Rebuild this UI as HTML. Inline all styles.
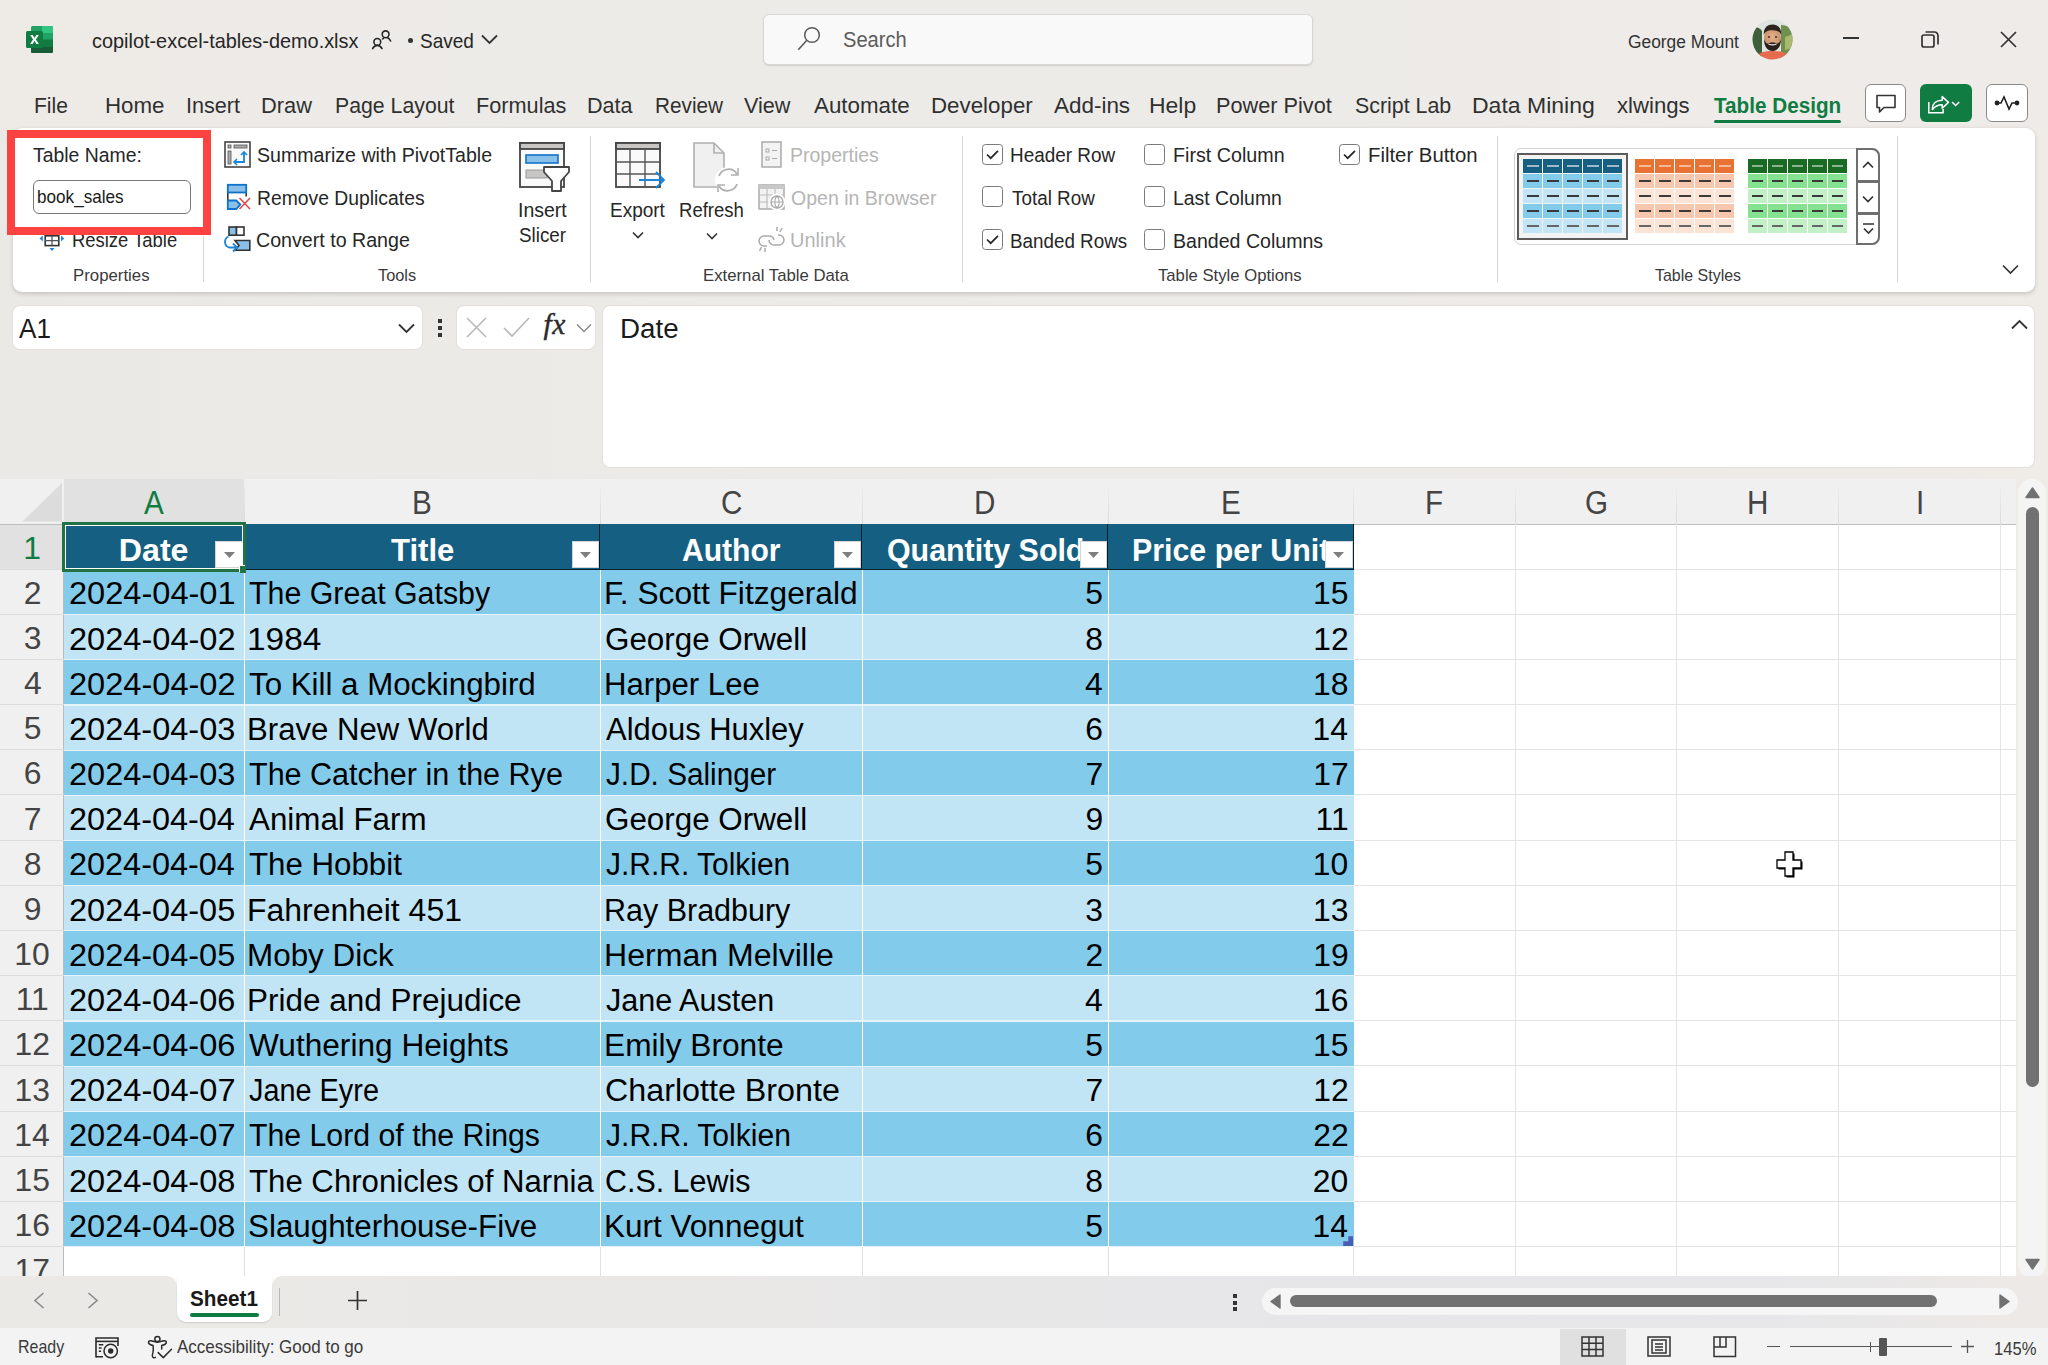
<!DOCTYPE html><html><head><meta charset='utf-8'><style>
*{box-sizing:border-box;margin:0;padding:0}
html,body{width:2048px;height:1365px;overflow:hidden}
body{position:relative;background:linear-gradient(90deg,#ebe9e6 0%,#ecebe8 50%,#efebe7 100%);font-family:"Liberation Sans",sans-serif;color:#262626}
.a{position:absolute}
.t{position:absolute;white-space:nowrap;line-height:1}
svg{position:absolute;overflow:visible}
</style></head><body><div class="a" style="left:0px;top:0px;width:2048px;height:128px;background:linear-gradient(90deg,#eeebe7 0%,#ecebe8 50%,#efebe8 100%)"></div>
<svg style="left:26px;top:26px" width="27" height="27" viewBox="0 0 27 27">
<rect x="5" y="0" width="22" height="27" rx="1.5" fill="#21a366"/>
<rect x="16" y="0" width="11" height="7" fill="#33c481"/>
<rect x="5" y="13.5" width="22" height="7" fill="#107c41"/>
<path d="M5 20.5h22v5a1.5 1.5 0 0 1-1.5 1.5h-19A1.5 1.5 0 0 1 5 25.5z" fill="#185c37"/>
<rect x="0" y="5" width="17" height="17" rx="1.5" fill="#107c41"/>
<path d="M4.2 9h2.6l1.7 3.1 1.8-3.1h2.5l-2.9 4.5 3 4.5h-2.6l-1.8-3.2-1.8 3.2H4.1l3-4.5z" fill="#fff"/>
</svg>
<div class="t" style="left:91.80px;top:31.45px;font-size:20.3px;color:#262626;font-weight:400;transform:scaleX(0.9808);transform-origin:0 0;">copilot-excel-tables-demo.xlsx</div>
<svg style="left:371px;top:29px" width="22" height="22" viewBox="0 0 22 22" fill="none" stroke="#262626" stroke-width="1.6" stroke-linecap="round">
<circle cx="6.3" cy="12.9" r="3.4"/><path d="M1.6 19.6C2.6 17.7 4.3 16.4 6.3 16.4S10 17.7 11 19.6"/>
<circle cx="14.6" cy="5.3" r="3.4"/><path d="M12.3 9.5l-0.8 .4M16.6 8.8C17.9 9.4 18.9 10.6 19.6 12"/></svg>
<div class="a" style="left:408px;top:38px;width:5px;height:5px;border-radius:50%;background:#333"></div>
<div class="t" style="left:420.15px;top:31.02px;font-size:20.8px;color:#262626;font-weight:400;transform:scaleX(0.9121);transform-origin:0 0;">Saved</div>
<svg style="left:481px;top:34px" width="17" height="11" viewBox="0 0 17 11"><path d="M1 1.5l7.5 7.5 7.5-7.5" fill="none" stroke="#333" stroke-width="1.8"/></svg>
<div class="a" style="left:762.5px;top:14px;width:550.0px;height:50.5px;background:#f9f9f9;border:1px solid #d9d6d3;border-radius:6px;box-shadow:0 1px 1.5px rgba(0,0,0,.12)"></div>
<svg style="left:797px;top:27px" width="24" height="24" viewBox="0 0 24 24"><circle cx="15" cy="8" r="7.3" fill="none" stroke="#5a5a5a" stroke-width="1.5"/><path d="M9.8 13.3L1.3 22.8" stroke="#5a5a5a" stroke-width="1.6"/></svg>
<div class="t" style="left:842.80px;top:29.19px;font-size:22.6px;color:#5c5c5c;font-weight:400;transform:scaleX(0.8893);transform-origin:0 0;">Search</div>
<div class="t" style="left:1627.53px;top:32.50px;font-size:18px;color:#333;font-weight:400;transform:scaleX(0.9638);transform-origin:0 0;">George Mount</div>
<svg style="left:1752px;top:19px" width="41" height="41" viewBox="0 0 41 41">
<defs><clipPath id="av"><circle cx="20.5" cy="20.5" r="20"/></clipPath><radialGradient id="fg" cx="0.5" cy="0.45" r="0.5"><stop offset="0" stop-color="#e3b08c"/><stop offset="1" stop-color="#c98f6a"/></radialGradient></defs>
<g clip-path="url(#av)">
<rect width="41" height="41" fill="#dfe3df"/>
<path d="M0 10q6-4 10 2v29H0z" fill="#3f5f3a"/>
<path d="M29 6q8 0 12 6v29H29z" fill="#6f8f4f"/>
<path d="M33 18l8-3v14l-8 2z" fill="#a9b86f"/>
<path d="M2 41c2-7 9-9 18.5-9S37 34 39 41z" fill="#e56a4e"/>
<ellipse cx="20.5" cy="19" rx="8.5" ry="10.5" fill="url(#fg)"/>
<path d="M11.8 16c-.5-7 3.5-10.5 8.7-10.5s9.2 3.5 8.7 10.5c-1-3-3-4.8-8.7-4.8s-7.7 1.8-8.7 4.8z" fill="#2e241f"/>
<path d="M12 20c0 8 3.8 12 8.5 12s8.5-4 8.5-12c-.8 2.5-2 4.3-3.8 4.8-1.5-.9-2.9-1.2-4.7-1.2s-3.2.3-4.7 1.2c-1.8-.5-3-2.3-3.8-4.8z" fill="#2a201b"/>
<path d="M16.5 25q4 1.8 8 0" stroke="#f4f4f4" stroke-width="1.1" fill="none"/>
<circle cx="17" cy="18" r=".9" fill="#2a201b"/><circle cx="24" cy="18" r=".9" fill="#2a201b"/>
</g></svg>
<div class="a" style="left:1843px;top:37px;width:16px;height:2px;background:#333"></div>
<svg style="left:1921px;top:31px" width="18" height="17" viewBox="0 0 18 17" fill="none" stroke="#333" stroke-width="1.7"><rect x="1" y="4" width="12" height="12" rx="2"/><path d="M4.5 1h9a3.5 3.5 0 0 1 3.5 3.5v9"/></svg>
<svg style="left:2000px;top:31px" width="17" height="17" viewBox="0 0 17 17"><path d="M1 1l15 15M16 1L1 16" stroke="#333" stroke-width="1.7"/></svg>
<div class="t" style="left:34.31px;top:93.80px;font-size:22.7px;color:#303030;font-weight:400;transform:scaleX(0.9285);transform-origin:0 0;">File</div>
<div class="t" style="left:104.81px;top:93.80px;font-size:22.7px;color:#303030;font-weight:400;transform:scaleX(0.9832);transform-origin:0 0;">Home</div>
<div class="t" style="left:186.05px;top:93.80px;font-size:22.7px;color:#303030;font-weight:400;transform:scaleX(0.9525);transform-origin:0 0;">Insert</div>
<div class="t" style="left:261.45px;top:93.80px;font-size:22.7px;color:#303030;font-weight:400;transform:scaleX(0.9631);transform-origin:0 0;">Draw</div>
<div class="t" style="left:334.70px;top:93.80px;font-size:22.7px;color:#303030;font-weight:400;transform:scaleX(0.9376);transform-origin:0 0;">Page Layout</div>
<div class="t" style="left:476.26px;top:93.80px;font-size:22.7px;color:#303030;font-weight:400;transform:scaleX(0.9561);transform-origin:0 0;">Formulas</div>
<div class="t" style="left:587.37px;top:93.80px;font-size:22.7px;color:#303030;font-weight:400;transform:scaleX(0.9503);transform-origin:0 0;">Data</div>
<div class="t" style="left:654.64px;top:93.80px;font-size:22.7px;color:#303030;font-weight:400;transform:scaleX(0.9141);transform-origin:0 0;">Review</div>
<div class="t" style="left:744.49px;top:93.80px;font-size:22.7px;color:#303030;font-weight:400;transform:scaleX(0.9529);transform-origin:0 0;">View</div>
<div class="t" style="left:813.59px;top:93.80px;font-size:22.7px;color:#303030;font-weight:400;transform:scaleX(0.9842);transform-origin:0 0;">Automate</div>
<div class="t" style="left:930.81px;top:93.80px;font-size:22.7px;color:#303030;font-weight:400;transform:scaleX(0.9838);transform-origin:0 0;">Developer</div>
<div class="t" style="left:1054.09px;top:93.80px;font-size:22.7px;color:#303030;font-weight:400;transform:scaleX(0.9889);transform-origin:0 0;">Add-ins</div>
<div class="t" style="left:1149.06px;top:93.80px;font-size:22.7px;color:#303030;font-weight:400;transform:scaleX(1.0108);transform-origin:0 0;">Help</div>
<div class="t" style="left:1216.26px;top:93.80px;font-size:22.7px;color:#303030;font-weight:400;transform:scaleX(0.9566);transform-origin:0 0;">Power Pivot</div>
<div class="t" style="left:1355.04px;top:93.80px;font-size:22.7px;color:#303030;font-weight:400;transform:scaleX(0.9419);transform-origin:0 0;">Script Lab</div>
<div class="t" style="left:1471.76px;top:93.80px;font-size:22.7px;color:#303030;font-weight:400;transform:scaleX(1.0143);transform-origin:0 0;">Data Mining</div>
<div class="t" style="left:1616.78px;top:93.80px;font-size:22.7px;color:#303030;font-weight:400;transform:scaleX(0.9764);transform-origin:0 0;">xlwings</div>
<div class="t" style="left:1713.79px;top:93.80px;font-size:22.7px;color:#107c41;font-weight:700;transform:scaleX(0.9115);transform-origin:0 0;">Table Design</div>
<div class="a" style="left:1714px;top:120px;width:127px;height:3px;background:#107c41;border-radius:2px"></div>
<div class="a" style="left:1865px;top:84px;width:41px;height:38px;background:#fff;border:1px solid #8a8a8a;border-radius:6px"></div>
<svg style="left:1875px;top:94px" width="22" height="20" viewBox="0 0 22 20"><path d="M2 1.5h18v12H9l-4.5 4.5v-4.5H2z" fill="none" stroke="#333" stroke-width="1.6" stroke-linejoin="round"/></svg>
<div class="a" style="left:1920px;top:84px;width:52px;height:38px;background:#107c41;border-radius:6px"></div>
<svg style="left:1927px;top:93px" width="34" height="21.5" viewBox="0 0 38 24" fill="none" stroke="#fff" stroke-width="1.7"><path d="M2 10v12h16v-4"/><path d="M6 18c0-6 4-10 11-10V4l7 6.5-7 6.5v-4c-5 0-8 1.5-11 5.5z" stroke-linejoin="round"/><path d="M28 10l4 4 4-4"/></svg>
<div class="a" style="left:1986px;top:84px;width:42px;height:38px;background:#fff;border:1px solid #8a8a8a;border-radius:6px"></div>
<svg style="left:1994px;top:94px" width="26" height="18" viewBox="0 0 26 18" fill="none" stroke="#222" stroke-width="1.6"><path d="M3 9h4l3-6 5 12 3-6h5"/><circle cx="3" cy="9" r="1.6" fill="#222"/><circle cx="23" cy="9" r="1.6" fill="#222"/></svg>
<div class="a" style="left:13px;top:128px;width:2022px;height:164px;background:#fff;border-radius:9px;box-shadow:0 1.5px 4px rgba(0,0,0,.16)"></div>
<div class="t" style="left:33.21px;top:146.29px;font-size:19.9px;color:#262626;font-weight:400;transform:scaleX(0.9749);transform-origin:0 0;">Table Name:</div>
<div class="a" style="left:33px;top:179.5px;width:158px;height:34.5px;border:1.3px solid #777;border-radius:6px;background:#fff"></div>
<div class="t" style="left:36.69px;top:187.93px;font-size:18.2px;color:#1a1a1a;font-weight:400;transform:scaleX(0.9416);transform-origin:0 0;">book_sales</div>
<svg style="left:39px;top:226px" width="26" height="28" viewBox="0 0 26 28"><rect x="6.2" y="9.8" width="13.6" height="9.8" fill="#fff" stroke="#333" stroke-width="1.6"/><path d="M6.2 14.7h13.6M13 9.8v9.8" stroke="#555" stroke-width="1.3"/><path d="M0.5 12.6l3.3-3v6z M25.3 12.6l-3.3-3v6z M13 25l-2.5-3h5z M13 0.5l-2.5 3h5z" fill="#1b86d9"/></svg>
<div class="t" style="left:71.82px;top:231.29px;font-size:19.9px;color:#262626;font-weight:400;transform:scaleX(0.9267);transform-origin:0 0;">Resize Table</div>
<div class="t" style="left:72.76px;top:268.09px;font-size:15.9px;color:#3a3a3a;font-weight:400;transform:scaleX(1.0567);transform-origin:0 0;">Properties</div>
<div class="a" style="left:7px;top:130px;width:204px;height:105px;border:8px solid #fd4242"></div>
<div class="a" style="left:203px;top:236px;width:1.3000000000000114px;height:46px;background:#d6d6d6"></div>
<svg style="left:224px;top:141px" width="27" height="27" viewBox="0 0 27 27"><rect x="1" y="1" width="25" height="25" fill="#fafafa" stroke="#444" stroke-width="1.6"/><rect x="4" y="4" width="3" height="3" fill="#aaa" stroke="#555" stroke-width=".8"/><rect x="10" y="4" width="13" height="3" fill="#aaa" stroke="#555" stroke-width=".8"/><rect x="4" y="10" width="3" height="13" fill="#aaa" stroke="#555" stroke-width=".8"/><path d="M11 21h9v-9" fill="none" stroke="#1b86d9" stroke-width="1.8"/><path d="M17 14l3-3 3 3M13 18l-3 3 3 3" fill="none" stroke="#1b86d9" stroke-width="1.6"/></svg>
<div class="t" style="left:256.52px;top:146.09px;font-size:19.9px;color:#262626;font-weight:400;transform:scaleX(0.9844);transform-origin:0 0;">Summarize with PivotTable</div>
<svg style="left:226px;top:183px" width="26" height="28" viewBox="0 0 26 28"><path d="M1.8 9.5v8M20.2 9.5v4" stroke="#333" stroke-width="1.6"/><rect x="1.8" y="1.8" width="18.4" height="7.7" fill="#89c0ea" stroke="#1172c9" stroke-width="1.8"/><path d="M1.8 17.5h8.5l4 4-4 4.5H1.8z" fill="#89c0ea" stroke="#1172c9" stroke-width="1.8" stroke-linejoin="miter"/><path d="M13.5 15l10.5 11M24 15L13.5 26" stroke="#e8413b" stroke-width="1.5"/></svg>
<div class="t" style="left:256.55px;top:188.69px;font-size:19.9px;color:#262626;font-weight:400;transform:scaleX(0.9715);transform-origin:0 0;">Remove Duplicates</div>
<svg style="left:223px;top:226px" width="28" height="28" viewBox="0 0 28 28"><rect x="6" y="1" width="7.5" height="8.2" fill="#89c0ea" stroke="#333" stroke-width="1.6"/><rect x="13.5" y="1" width="7.5" height="8.2" fill="#fafafa" stroke="#333" stroke-width="1.6"/><path d="M12 14.5h14.8v9.8H12l4-4.9z" fill="#89c0ea" stroke="#333" stroke-width="1.6" stroke-linejoin="miter"/><path d="M5.5 10.5C1 12.5 0.5 19.5 6 21.5h7.5M10 17.5l4 4-4 4" fill="none" stroke="#1b86d9" stroke-width="1.8"/></svg>
<div class="t" style="left:256.42px;top:231.09px;font-size:19.9px;color:#262626;font-weight:400;transform:scaleX(0.9869);transform-origin:0 0;">Convert to Range</div>
<div class="t" style="left:377.67px;top:268.19px;font-size:15.9px;color:#3a3a3a;font-weight:400;transform:scaleX(1.0289);transform-origin:0 0;">Tools</div>
<svg style="left:519px;top:142px" width="52" height="52" viewBox="0 0 52 52"><rect x="1" y="1" width="44" height="44" fill="#fafafa" stroke="#444" stroke-width="1.8"/><rect x="1" y="1" width="44" height="6" fill="#c8c6c4" stroke="#444" stroke-width="1.8"/><rect x="7" y="13" width="32" height="8" fill="#89c0ea" stroke="#1172c9" stroke-width="1.6"/><rect x="7" y="28" width="21" height="8" fill="#c8c6c4" stroke="#999" stroke-width="1"/><path d="M25 25h25v5l-8 9v10h-9V39l-8-9z" fill="#fff" stroke="#444" stroke-width="1.8" stroke-linejoin="round"/></svg>
<div class="t" style="left:517.94px;top:200.89px;font-size:19.9px;color:#262626;font-weight:400;transform:scaleX(0.9800);transform-origin:0 0;">Insert</div>
<div class="t" style="left:519.15px;top:226.29px;font-size:19.9px;color:#262626;font-weight:400;transform:scaleX(0.9474);transform-origin:0 0;">Slicer</div>
<div class="a" style="left:589.5px;top:136px;width:1.2999999999999545px;height:146px;background:#d6d6d6"></div>
<svg style="left:615px;top:142px" width="52" height="52" viewBox="0 0 52 52"><rect x="1" y="1" width="44" height="44" fill="#fafafa" stroke="#444" stroke-width="1.8"/><rect x="1" y="1" width="44" height="6" fill="#c8c6c4" stroke="#444" stroke-width="1.8"/><path d="M1 20h44M1 32h44M15 7v38M30 7v38" stroke="#555" stroke-width="1.4"/><path d="M24 38h25M41 30l8 8-8 8" fill="none" stroke="#1b86d9" stroke-width="1.8"/></svg>
<div class="t" style="left:610.18px;top:200.89px;font-size:19.9px;color:#262626;font-weight:400;transform:scaleX(0.9549);transform-origin:0 0;">Export</div>
<svg style="left:632px;top:231px" width="12" height="8" viewBox="0 0 12 8"><path d="M1 1.5l5 5 5-5" fill="none" stroke="#333" stroke-width="1.6"/></svg>
<svg style="left:693px;top:142px" width="48" height="52" viewBox="0 0 48 52"><path d="M1 1h20l10 10v34H1z" fill="#f0f0f0" stroke="#b0b0b0" stroke-width="1.6"/><path d="M21 1v10h10" fill="none" stroke="#b0b0b0" stroke-width="1.6"/><circle cx="35" cy="38" r="13" fill="#fff"/><path d="M26 34a10 10 0 0 1 18-2M44 42a10 10 0 0 1-18 2" fill="none" stroke="#b0b0b0" stroke-width="1.8"/><path d="M45 26v7h-7M25 50v-7h7" fill="none" stroke="#b0b0b0" stroke-width="1.6"/></svg>
<div class="t" style="left:679.02px;top:201.49px;font-size:19.9px;color:#262626;font-weight:400;transform:scaleX(0.9316);transform-origin:0 0;">Refresh</div>
<svg style="left:706px;top:232px" width="12" height="8" viewBox="0 0 12 8"><path d="M1 1.5l5 5 5-5" fill="none" stroke="#333" stroke-width="1.6"/></svg>
<svg style="left:761px;top:141px" width="21" height="27" viewBox="0 0 21 27"><rect x="1" y="1" width="19" height="25" fill="#f3f3f3" stroke="#aaa" stroke-width="1.5"/><rect x="5" y="8" width="3" height="3" fill="none" stroke="#aaa"/><rect x="5" y="16" width="3" height="3" fill="none" stroke="#aaa"/><path d="M11 9.5h5M11 17.5h5" stroke="#aaa" stroke-width="1.2"/></svg>
<div class="t" style="left:790.24px;top:145.89px;font-size:19.9px;color:#b5b5b5;font-weight:400;transform:scaleX(0.9801);transform-origin:0 0;">Properties</div>
<svg style="left:758px;top:184px" width="28" height="27" viewBox="0 0 28 27"><rect x="1" y="1" width="25" height="24" fill="#f3f3f3" stroke="#aaa" stroke-width="1.5"/><rect x="1" y="1" width="25" height="4" fill="#c8c8c8"/><path d="M1 11h25M1 18h10M9 5v20M17 5v8" stroke="#bbb" stroke-width="1.1"/><circle cx="19" cy="18" r="8.5" fill="#fff"/><circle cx="19" cy="18" r="6" fill="none" stroke="#aaa" stroke-width="1.4"/><path d="M13 18h12M19 12c-3 3-3 9 0 12M19 12c3 3 3 9 0 12" fill="none" stroke="#aaa" stroke-width="1.1"/></svg>
<div class="t" style="left:790.92px;top:188.79px;font-size:19.9px;color:#b5b5b5;font-weight:400;transform:scaleX(0.9819);transform-origin:0 0;">Open in Browser</div>
<svg style="left:758px;top:226px" width="27" height="27" viewBox="0 0 27 27" fill="none" stroke="#aaa" stroke-width="1.5"><path d="M9 20H6a5 5 0 0 1 0-10h5a5 5 0 0 1 5 4"/><path d="M11 14a5 5 0 0 0 5 5h5a5 5 0 0 0 0-10h-1"/><path d="M19 1v4M24 2l-2 4M1.5 25l2-4M7 26v-4"/></svg>
<div class="t" style="left:790.30px;top:231.29px;font-size:19.9px;color:#b5b5b5;font-weight:400;transform:scaleX(1.0069);transform-origin:0 0;">Unlink</div>
<div class="t" style="left:702.66px;top:268.39px;font-size:15.9px;color:#3a3a3a;font-weight:400;transform:scaleX(1.0538);transform-origin:0 0;">External Table Data</div>
<div class="a" style="left:962px;top:136px;width:1.2999999999999545px;height:146px;background:#d6d6d6"></div>
<div class="a" style="left:981.5px;top:143.8px;width:21px;height:21px;border:1.6px solid #7a7a7a;border-radius:3.5px;background:#fff"></div>
<svg style="left:981.5px;top:143.8px" width="21" height="21" viewBox="0 0 21 21"><path d="M5 10.5l3.7 3.7 7.3-7.3" fill="none" stroke="#262626" stroke-width="1.7"/></svg>
<div class="t" style="left:1010.49px;top:146.19px;font-size:19.9px;color:#262626;font-weight:400;transform:scaleX(0.9509);transform-origin:0 0;">Header Row</div>
<div class="a" style="left:981.5px;top:186.3px;width:21px;height:21px;border:1.6px solid #7a7a7a;border-radius:3.5px;background:#fff"></div>
<div class="t" style="left:1011.62px;top:188.69px;font-size:19.9px;color:#262626;font-weight:400;transform:scaleX(0.9476);transform-origin:0 0;">Total Row</div>
<div class="a" style="left:981.5px;top:229.2px;width:21px;height:21px;border:1.6px solid #7a7a7a;border-radius:3.5px;background:#fff"></div>
<svg style="left:981.5px;top:229.2px" width="21" height="21" viewBox="0 0 21 21"><path d="M5 10.5l3.7 3.7 7.3-7.3" fill="none" stroke="#262626" stroke-width="1.7"/></svg>
<div class="t" style="left:1010.49px;top:231.69px;font-size:19.9px;color:#262626;font-weight:400;transform:scaleX(0.9458);transform-origin:0 0;">Banded Rows</div>
<div class="a" style="left:1144px;top:143.8px;width:21px;height:21px;border:1.6px solid #7a7a7a;border-radius:3.5px;background:#fff"></div>
<div class="t" style="left:1172.62px;top:146.19px;font-size:19.9px;color:#262626;font-weight:400;transform:scaleX(0.9905);transform-origin:0 0;">First Column</div>
<div class="a" style="left:1144px;top:186.3px;width:21px;height:21px;border:1.6px solid #7a7a7a;border-radius:3.5px;background:#fff"></div>
<div class="t" style="left:1172.65px;top:188.69px;font-size:19.9px;color:#262626;font-weight:400;transform:scaleX(0.9747);transform-origin:0 0;">Last Column</div>
<div class="a" style="left:1144px;top:229.2px;width:21px;height:21px;border:1.6px solid #7a7a7a;border-radius:3.5px;background:#fff"></div>
<div class="t" style="left:1172.63px;top:231.69px;font-size:19.9px;color:#262626;font-weight:400;transform:scaleX(0.9837);transform-origin:0 0;">Banded Columns</div>
<div class="a" style="left:1339.3px;top:143.8px;width:21px;height:21px;border:1.6px solid #7a7a7a;border-radius:3.5px;background:#fff"></div>
<svg style="left:1339.3px;top:143.8px" width="21" height="21" viewBox="0 0 21 21"><path d="M5 10.5l3.7 3.7 7.3-7.3" fill="none" stroke="#262626" stroke-width="1.7"/></svg>
<div class="t" style="left:1367.77px;top:146.19px;font-size:19.9px;color:#262626;font-weight:400;transform:scaleX(1.0223);transform-origin:0 0;">Filter Button</div>
<div class="t" style="left:1158.47px;top:267.99px;font-size:15.9px;color:#3a3a3a;font-weight:400;transform:scaleX(1.0492);transform-origin:0 0;">Table Style Options</div>
<div class="a" style="left:1497px;top:136px;width:1.2999999999999545px;height:146px;background:#d6d6d6"></div>
<div class="a" style="left:1513.7px;top:148.3px;width:366.29999999999995px;height:97.19999999999999px;border:1.5px solid #d2d2d2;border-radius:7px;background:#fff"></div>
<div class="a" style="left:1516.6px;top:152.7px;width:111.80000000000018px;height:87.10000000000002px;border:2.2px solid #5c5c5c;background:#f3f3f3"></div>
<div class="a" style="left:1523.00px;top:159.00px;width:19.00px;height:14.10px;background:#156082"></div><div class="a" style="left:1527.00px;top:165.05px;width:11.5px;height:2px;background:#9fb9c8"></div><div class="a" style="left:1543.00px;top:159.00px;width:19.00px;height:14.10px;background:#156082"></div><div class="a" style="left:1547.00px;top:165.05px;width:11.5px;height:2px;background:#9fb9c8"></div><div class="a" style="left:1563.00px;top:159.00px;width:19.00px;height:14.10px;background:#156082"></div><div class="a" style="left:1567.00px;top:165.05px;width:11.5px;height:2px;background:#9fb9c8"></div><div class="a" style="left:1583.00px;top:159.00px;width:19.00px;height:14.10px;background:#156082"></div><div class="a" style="left:1587.00px;top:165.05px;width:11.5px;height:2px;background:#9fb9c8"></div><div class="a" style="left:1603.00px;top:159.00px;width:19.00px;height:14.10px;background:#156082"></div><div class="a" style="left:1607.00px;top:165.05px;width:11.5px;height:2px;background:#9fb9c8"></div><div class="a" style="left:1523.00px;top:174.10px;width:19.00px;height:14.10px;background:#83cbeb"></div><div class="a" style="left:1527.00px;top:180.15px;width:11.5px;height:2px;background:#3a3a3a"></div><div class="a" style="left:1543.00px;top:174.10px;width:19.00px;height:14.10px;background:#83cbeb"></div><div class="a" style="left:1547.00px;top:180.15px;width:11.5px;height:2px;background:#3a3a3a"></div><div class="a" style="left:1563.00px;top:174.10px;width:19.00px;height:14.10px;background:#83cbeb"></div><div class="a" style="left:1567.00px;top:180.15px;width:11.5px;height:2px;background:#3a3a3a"></div><div class="a" style="left:1583.00px;top:174.10px;width:19.00px;height:14.10px;background:#83cbeb"></div><div class="a" style="left:1587.00px;top:180.15px;width:11.5px;height:2px;background:#3a3a3a"></div><div class="a" style="left:1603.00px;top:174.10px;width:19.00px;height:14.10px;background:#83cbeb"></div><div class="a" style="left:1607.00px;top:180.15px;width:11.5px;height:2px;background:#3a3a3a"></div><div class="a" style="left:1523.00px;top:189.20px;width:19.00px;height:14.10px;background:#c1e5f5"></div><div class="a" style="left:1527.00px;top:195.25px;width:11.5px;height:2px;background:#3a3a3a"></div><div class="a" style="left:1543.00px;top:189.20px;width:19.00px;height:14.10px;background:#c1e5f5"></div><div class="a" style="left:1547.00px;top:195.25px;width:11.5px;height:2px;background:#3a3a3a"></div><div class="a" style="left:1563.00px;top:189.20px;width:19.00px;height:14.10px;background:#c1e5f5"></div><div class="a" style="left:1567.00px;top:195.25px;width:11.5px;height:2px;background:#3a3a3a"></div><div class="a" style="left:1583.00px;top:189.20px;width:19.00px;height:14.10px;background:#c1e5f5"></div><div class="a" style="left:1587.00px;top:195.25px;width:11.5px;height:2px;background:#3a3a3a"></div><div class="a" style="left:1603.00px;top:189.20px;width:19.00px;height:14.10px;background:#c1e5f5"></div><div class="a" style="left:1607.00px;top:195.25px;width:11.5px;height:2px;background:#3a3a3a"></div><div class="a" style="left:1523.00px;top:204.30px;width:19.00px;height:14.10px;background:#83cbeb"></div><div class="a" style="left:1527.00px;top:210.35px;width:11.5px;height:2px;background:#3a3a3a"></div><div class="a" style="left:1543.00px;top:204.30px;width:19.00px;height:14.10px;background:#83cbeb"></div><div class="a" style="left:1547.00px;top:210.35px;width:11.5px;height:2px;background:#3a3a3a"></div><div class="a" style="left:1563.00px;top:204.30px;width:19.00px;height:14.10px;background:#83cbeb"></div><div class="a" style="left:1567.00px;top:210.35px;width:11.5px;height:2px;background:#3a3a3a"></div><div class="a" style="left:1583.00px;top:204.30px;width:19.00px;height:14.10px;background:#83cbeb"></div><div class="a" style="left:1587.00px;top:210.35px;width:11.5px;height:2px;background:#3a3a3a"></div><div class="a" style="left:1603.00px;top:204.30px;width:19.00px;height:14.10px;background:#83cbeb"></div><div class="a" style="left:1607.00px;top:210.35px;width:11.5px;height:2px;background:#3a3a3a"></div><div class="a" style="left:1523.00px;top:219.40px;width:19.00px;height:14.10px;background:#c1e5f5"></div><div class="a" style="left:1527.00px;top:225.45px;width:11.5px;height:2px;background:#666"></div><div class="a" style="left:1543.00px;top:219.40px;width:19.00px;height:14.10px;background:#c1e5f5"></div><div class="a" style="left:1547.00px;top:225.45px;width:11.5px;height:2px;background:#666"></div><div class="a" style="left:1563.00px;top:219.40px;width:19.00px;height:14.10px;background:#c1e5f5"></div><div class="a" style="left:1567.00px;top:225.45px;width:11.5px;height:2px;background:#666"></div><div class="a" style="left:1583.00px;top:219.40px;width:19.00px;height:14.10px;background:#c1e5f5"></div><div class="a" style="left:1587.00px;top:225.45px;width:11.5px;height:2px;background:#666"></div><div class="a" style="left:1603.00px;top:219.40px;width:19.00px;height:14.10px;background:#c1e5f5"></div><div class="a" style="left:1607.00px;top:225.45px;width:11.5px;height:2px;background:#666"></div>
<div class="a" style="left:1635.30px;top:159.00px;width:19.00px;height:14.10px;background:#e97132"></div><div class="a" style="left:1639.30px;top:165.05px;width:11.5px;height:2px;background:#f4b996"></div><div class="a" style="left:1655.30px;top:159.00px;width:19.00px;height:14.10px;background:#e97132"></div><div class="a" style="left:1659.30px;top:165.05px;width:11.5px;height:2px;background:#f4b996"></div><div class="a" style="left:1675.30px;top:159.00px;width:19.00px;height:14.10px;background:#e97132"></div><div class="a" style="left:1679.30px;top:165.05px;width:11.5px;height:2px;background:#f4b996"></div><div class="a" style="left:1695.30px;top:159.00px;width:19.00px;height:14.10px;background:#e97132"></div><div class="a" style="left:1699.30px;top:165.05px;width:11.5px;height:2px;background:#f4b996"></div><div class="a" style="left:1715.30px;top:159.00px;width:19.00px;height:14.10px;background:#e97132"></div><div class="a" style="left:1719.30px;top:165.05px;width:11.5px;height:2px;background:#f4b996"></div><div class="a" style="left:1635.30px;top:174.10px;width:19.00px;height:14.10px;background:#f6c6ad"></div><div class="a" style="left:1639.30px;top:180.15px;width:11.5px;height:2px;background:#3a3a3a"></div><div class="a" style="left:1655.30px;top:174.10px;width:19.00px;height:14.10px;background:#f6c6ad"></div><div class="a" style="left:1659.30px;top:180.15px;width:11.5px;height:2px;background:#3a3a3a"></div><div class="a" style="left:1675.30px;top:174.10px;width:19.00px;height:14.10px;background:#f6c6ad"></div><div class="a" style="left:1679.30px;top:180.15px;width:11.5px;height:2px;background:#3a3a3a"></div><div class="a" style="left:1695.30px;top:174.10px;width:19.00px;height:14.10px;background:#f6c6ad"></div><div class="a" style="left:1699.30px;top:180.15px;width:11.5px;height:2px;background:#3a3a3a"></div><div class="a" style="left:1715.30px;top:174.10px;width:19.00px;height:14.10px;background:#f6c6ad"></div><div class="a" style="left:1719.30px;top:180.15px;width:11.5px;height:2px;background:#3a3a3a"></div><div class="a" style="left:1635.30px;top:189.20px;width:19.00px;height:14.10px;background:#fbe3d6"></div><div class="a" style="left:1639.30px;top:195.25px;width:11.5px;height:2px;background:#3a3a3a"></div><div class="a" style="left:1655.30px;top:189.20px;width:19.00px;height:14.10px;background:#fbe3d6"></div><div class="a" style="left:1659.30px;top:195.25px;width:11.5px;height:2px;background:#3a3a3a"></div><div class="a" style="left:1675.30px;top:189.20px;width:19.00px;height:14.10px;background:#fbe3d6"></div><div class="a" style="left:1679.30px;top:195.25px;width:11.5px;height:2px;background:#3a3a3a"></div><div class="a" style="left:1695.30px;top:189.20px;width:19.00px;height:14.10px;background:#fbe3d6"></div><div class="a" style="left:1699.30px;top:195.25px;width:11.5px;height:2px;background:#3a3a3a"></div><div class="a" style="left:1715.30px;top:189.20px;width:19.00px;height:14.10px;background:#fbe3d6"></div><div class="a" style="left:1719.30px;top:195.25px;width:11.5px;height:2px;background:#3a3a3a"></div><div class="a" style="left:1635.30px;top:204.30px;width:19.00px;height:14.10px;background:#f6c6ad"></div><div class="a" style="left:1639.30px;top:210.35px;width:11.5px;height:2px;background:#3a3a3a"></div><div class="a" style="left:1655.30px;top:204.30px;width:19.00px;height:14.10px;background:#f6c6ad"></div><div class="a" style="left:1659.30px;top:210.35px;width:11.5px;height:2px;background:#3a3a3a"></div><div class="a" style="left:1675.30px;top:204.30px;width:19.00px;height:14.10px;background:#f6c6ad"></div><div class="a" style="left:1679.30px;top:210.35px;width:11.5px;height:2px;background:#3a3a3a"></div><div class="a" style="left:1695.30px;top:204.30px;width:19.00px;height:14.10px;background:#f6c6ad"></div><div class="a" style="left:1699.30px;top:210.35px;width:11.5px;height:2px;background:#3a3a3a"></div><div class="a" style="left:1715.30px;top:204.30px;width:19.00px;height:14.10px;background:#f6c6ad"></div><div class="a" style="left:1719.30px;top:210.35px;width:11.5px;height:2px;background:#3a3a3a"></div><div class="a" style="left:1635.30px;top:219.40px;width:19.00px;height:14.10px;background:#fbe3d6"></div><div class="a" style="left:1639.30px;top:225.45px;width:11.5px;height:2px;background:#666"></div><div class="a" style="left:1655.30px;top:219.40px;width:19.00px;height:14.10px;background:#fbe3d6"></div><div class="a" style="left:1659.30px;top:225.45px;width:11.5px;height:2px;background:#666"></div><div class="a" style="left:1675.30px;top:219.40px;width:19.00px;height:14.10px;background:#fbe3d6"></div><div class="a" style="left:1679.30px;top:225.45px;width:11.5px;height:2px;background:#666"></div><div class="a" style="left:1695.30px;top:219.40px;width:19.00px;height:14.10px;background:#fbe3d6"></div><div class="a" style="left:1699.30px;top:225.45px;width:11.5px;height:2px;background:#666"></div><div class="a" style="left:1715.30px;top:219.40px;width:19.00px;height:14.10px;background:#fbe3d6"></div><div class="a" style="left:1719.30px;top:225.45px;width:11.5px;height:2px;background:#666"></div>
<div class="a" style="left:1747.50px;top:159.00px;width:19.00px;height:14.10px;background:#196b24"></div><div class="a" style="left:1751.50px;top:165.05px;width:11.5px;height:2px;background:#8bb391"></div><div class="a" style="left:1767.50px;top:159.00px;width:19.00px;height:14.10px;background:#196b24"></div><div class="a" style="left:1771.50px;top:165.05px;width:11.5px;height:2px;background:#8bb391"></div><div class="a" style="left:1787.50px;top:159.00px;width:19.00px;height:14.10px;background:#196b24"></div><div class="a" style="left:1791.50px;top:165.05px;width:11.5px;height:2px;background:#8bb391"></div><div class="a" style="left:1807.50px;top:159.00px;width:19.00px;height:14.10px;background:#196b24"></div><div class="a" style="left:1811.50px;top:165.05px;width:11.5px;height:2px;background:#8bb391"></div><div class="a" style="left:1827.50px;top:159.00px;width:19.00px;height:14.10px;background:#196b24"></div><div class="a" style="left:1831.50px;top:165.05px;width:11.5px;height:2px;background:#8bb391"></div><div class="a" style="left:1747.50px;top:174.10px;width:19.00px;height:14.10px;background:#84e291"></div><div class="a" style="left:1751.50px;top:180.15px;width:11.5px;height:2px;background:#3a3a3a"></div><div class="a" style="left:1767.50px;top:174.10px;width:19.00px;height:14.10px;background:#84e291"></div><div class="a" style="left:1771.50px;top:180.15px;width:11.5px;height:2px;background:#3a3a3a"></div><div class="a" style="left:1787.50px;top:174.10px;width:19.00px;height:14.10px;background:#84e291"></div><div class="a" style="left:1791.50px;top:180.15px;width:11.5px;height:2px;background:#3a3a3a"></div><div class="a" style="left:1807.50px;top:174.10px;width:19.00px;height:14.10px;background:#84e291"></div><div class="a" style="left:1811.50px;top:180.15px;width:11.5px;height:2px;background:#3a3a3a"></div><div class="a" style="left:1827.50px;top:174.10px;width:19.00px;height:14.10px;background:#84e291"></div><div class="a" style="left:1831.50px;top:180.15px;width:11.5px;height:2px;background:#3a3a3a"></div><div class="a" style="left:1747.50px;top:189.20px;width:19.00px;height:14.10px;background:#c2f1c8"></div><div class="a" style="left:1751.50px;top:195.25px;width:11.5px;height:2px;background:#3a3a3a"></div><div class="a" style="left:1767.50px;top:189.20px;width:19.00px;height:14.10px;background:#c2f1c8"></div><div class="a" style="left:1771.50px;top:195.25px;width:11.5px;height:2px;background:#3a3a3a"></div><div class="a" style="left:1787.50px;top:189.20px;width:19.00px;height:14.10px;background:#c2f1c8"></div><div class="a" style="left:1791.50px;top:195.25px;width:11.5px;height:2px;background:#3a3a3a"></div><div class="a" style="left:1807.50px;top:189.20px;width:19.00px;height:14.10px;background:#c2f1c8"></div><div class="a" style="left:1811.50px;top:195.25px;width:11.5px;height:2px;background:#3a3a3a"></div><div class="a" style="left:1827.50px;top:189.20px;width:19.00px;height:14.10px;background:#c2f1c8"></div><div class="a" style="left:1831.50px;top:195.25px;width:11.5px;height:2px;background:#3a3a3a"></div><div class="a" style="left:1747.50px;top:204.30px;width:19.00px;height:14.10px;background:#84e291"></div><div class="a" style="left:1751.50px;top:210.35px;width:11.5px;height:2px;background:#3a3a3a"></div><div class="a" style="left:1767.50px;top:204.30px;width:19.00px;height:14.10px;background:#84e291"></div><div class="a" style="left:1771.50px;top:210.35px;width:11.5px;height:2px;background:#3a3a3a"></div><div class="a" style="left:1787.50px;top:204.30px;width:19.00px;height:14.10px;background:#84e291"></div><div class="a" style="left:1791.50px;top:210.35px;width:11.5px;height:2px;background:#3a3a3a"></div><div class="a" style="left:1807.50px;top:204.30px;width:19.00px;height:14.10px;background:#84e291"></div><div class="a" style="left:1811.50px;top:210.35px;width:11.5px;height:2px;background:#3a3a3a"></div><div class="a" style="left:1827.50px;top:204.30px;width:19.00px;height:14.10px;background:#84e291"></div><div class="a" style="left:1831.50px;top:210.35px;width:11.5px;height:2px;background:#3a3a3a"></div><div class="a" style="left:1747.50px;top:219.40px;width:19.00px;height:14.10px;background:#c2f1c8"></div><div class="a" style="left:1751.50px;top:225.45px;width:11.5px;height:2px;background:#666"></div><div class="a" style="left:1767.50px;top:219.40px;width:19.00px;height:14.10px;background:#c2f1c8"></div><div class="a" style="left:1771.50px;top:225.45px;width:11.5px;height:2px;background:#666"></div><div class="a" style="left:1787.50px;top:219.40px;width:19.00px;height:14.10px;background:#c2f1c8"></div><div class="a" style="left:1791.50px;top:225.45px;width:11.5px;height:2px;background:#666"></div><div class="a" style="left:1807.50px;top:219.40px;width:19.00px;height:14.10px;background:#c2f1c8"></div><div class="a" style="left:1811.50px;top:225.45px;width:11.5px;height:2px;background:#666"></div><div class="a" style="left:1827.50px;top:219.40px;width:19.00px;height:14.10px;background:#c2f1c8"></div><div class="a" style="left:1831.50px;top:225.45px;width:11.5px;height:2px;background:#666"></div>
<div class="a" style="left:1855.5px;top:148.3px;width:24.0px;height:97.19999999999999px;border:2px solid #6e6e6e;border-radius:0 8px 8px 0;background:#fff"></div>
<div class="a" style="left:1855.5px;top:180.3px;width:24.0px;height:3.0px;background:#6e6e6e"></div>
<div class="a" style="left:1855.5px;top:211.8px;width:24.0px;height:3.0px;background:#6e6e6e"></div>
<svg style="left:1862px;top:160.5px" width="12" height="8" viewBox="0 0 12 8"><path d="M1 6.5l5-5 5 5" fill="none" stroke="#333" stroke-width="1.7"/></svg>
<svg style="left:1862px;top:194.5px" width="12" height="8" viewBox="0 0 12 8"><path d="M1 1.5l5 5 5-5" fill="none" stroke="#333" stroke-width="1.7"/></svg>
<svg style="left:1861.5px;top:222.5px" width="13" height="12" viewBox="0 0 13 12"><path d="M1 1h11M2 5.5l4.5 4.5 4.5-4.5" fill="none" stroke="#333" stroke-width="1.7"/></svg>
<div class="t" style="left:1654.58px;top:268.09px;font-size:15.9px;color:#3a3a3a;font-weight:400;transform:scaleX(1.0044);transform-origin:0 0;">Table Styles</div>
<div class="a" style="left:1897px;top:136px;width:1.2999999999999545px;height:146px;background:#d6d6d6"></div>
<svg style="left:2002px;top:264px" width="17" height="10" viewBox="0 0 17 10"><path d="M1 1.5l7.5 7.5 7.5-7.5" fill="none" stroke="#333" stroke-width="1.7"/></svg>
<div class="a" style="left:13.4px;top:305.7px;width:408.8px;height:43.0px;background:#fff;border-radius:7px;box-shadow:0 0 0 1px #e2dfdc"></div>
<div class="t" style="left:18.77px;top:314.36px;font-size:28.4px;color:#1a1a1a;font-weight:400;transform:scaleX(0.9179);transform-origin:0 0;">A1</div>
<svg style="left:398px;top:323px" width="17" height="10" viewBox="0 0 17 10"><path d="M1 1.5l7.5 7.5 7.5-7.5" fill="none" stroke="#333" stroke-width="1.8"/></svg>
<div class="a" style="left:437.5px;top:318.5px;width:4.5px;height:4.0px;background:#333"></div>
<div class="a" style="left:437.5px;top:325.5px;width:4.5px;height:4.0px;background:#333"></div>
<div class="a" style="left:437.5px;top:332.5px;width:4.5px;height:4.0px;background:#333"></div>
<div class="a" style="left:456.6px;top:305.6px;width:138.19999999999993px;height:43.299999999999955px;background:#fff;border-radius:7px;box-shadow:0 0 0 1px #e2dfdc"></div>
<svg style="left:466px;top:317px" width="21" height="21" viewBox="0 0 21 21"><path d="M1 1l19 19M20 1L1 20" stroke="#b8b8b8" stroke-width="1.6"/></svg>
<svg style="left:503px;top:317px" width="27" height="20" viewBox="0 0 27 20"><path d="M1 11l8 8L26 1" fill="none" stroke="#b8b8b8" stroke-width="1.6"/></svg>
<div class="t" style="left:543.5px;top:310px;font-family:'Liberation Serif',serif;font-style:italic;font-weight:400;font-size:29.5px;color:#2a2a2a;letter-spacing:0.5px;-webkit-text-stroke:0.4px #2a2a2a">fx</div>
<svg style="left:576px;top:323px" width="16" height="10" viewBox="0 0 16 10"><path d="M1 1.5l7 7 7-7" fill="none" stroke="#8a8a8a" stroke-width="1.5"/></svg>
<div class="a" style="left:602.7px;top:305.7px;width:1431.6px;height:161.10000000000002px;background:#fff;border-radius:7px;box-shadow:0 0 0 1px #e2dfdc"></div>
<div class="t" style="left:620.28px;top:314.33px;font-size:28.2px;color:#1a1a1a;font-weight:400;transform:scaleX(0.9836);transform-origin:0 0;">Date</div>
<svg style="left:2011px;top:320px" width="17" height="10" viewBox="0 0 17 10"><path d="M1 8.5l7.5-7.5 7.5 7.5" fill="none" stroke="#333" stroke-width="1.8"/></svg>
<div class="a" style="left:0px;top:479px;width:2016px;height:45px;background:#f0f0f0"></div>
<div class="a" style="left:0px;top:524px;width:64px;height:752px;background:#f0f0f0"></div>
<div class="a" style="left:64px;top:524px;width:1952px;height:752px;background:#fff"></div>
<svg style="left:0px;top:479px" width="64" height="45" viewBox="0 0 64 45"><path d="M62 4v38.5H22.5z" fill="#dcdcdc"/></svg>
<div class="a" style="left:64px;top:479px;width:180px;height:45px;background:#e1e1e1"></div>
<div class="a" style="left:0px;top:524.0px;width:64px;height:45.15999999999997px;background:#e1e1e1"></div>
<div class="a" style="left:243.5px;top:483px;width:1px;height:41px;background:linear-gradient(#efefef,#dadada)"></div><div class="a" style="left:599.8px;top:483px;width:1px;height:41px;background:linear-gradient(#efefef,#dadada)"></div><div class="a" style="left:861.8px;top:483px;width:1px;height:41px;background:linear-gradient(#efefef,#dadada)"></div><div class="a" style="left:1107.7px;top:483px;width:1px;height:41px;background:linear-gradient(#efefef,#dadada)"></div><div class="a" style="left:1353.2px;top:483px;width:1px;height:41px;background:linear-gradient(#efefef,#dadada)"></div><div class="a" style="left:1514.7px;top:483px;width:1px;height:41px;background:linear-gradient(#efefef,#dadada)"></div><div class="a" style="left:1675.8px;top:483px;width:1px;height:41px;background:linear-gradient(#efefef,#dadada)"></div><div class="a" style="left:1837.9px;top:483px;width:1px;height:41px;background:linear-gradient(#efefef,#dadada)"></div><div class="a" style="left:1999.7px;top:483px;width:1px;height:41px;background:linear-gradient(#efefef,#dadada)"></div>
<div class="a" style="left:0px;top:523.7px;width:2016px;height:1.2999999999999545px;background:#bdbdbd"></div>
<div class="a" style="left:63.3px;top:524px;width:1.2000000000000028px;height:752px;background:#bdbdbd"></div>
<div class="a" style="left:0px;top:568.66px;width:64px;height:1px;background:#dcdcdc"></div><div class="a" style="left:0px;top:613.82px;width:64px;height:1px;background:#dcdcdc"></div><div class="a" style="left:0px;top:658.98px;width:64px;height:1px;background:#dcdcdc"></div><div class="a" style="left:0px;top:704.14px;width:64px;height:1px;background:#dcdcdc"></div><div class="a" style="left:0px;top:749.30px;width:64px;height:1px;background:#dcdcdc"></div><div class="a" style="left:0px;top:794.46px;width:64px;height:1px;background:#dcdcdc"></div><div class="a" style="left:0px;top:839.62px;width:64px;height:1px;background:#dcdcdc"></div><div class="a" style="left:0px;top:884.78px;width:64px;height:1px;background:#dcdcdc"></div><div class="a" style="left:0px;top:929.94px;width:64px;height:1px;background:#dcdcdc"></div><div class="a" style="left:0px;top:975.10px;width:64px;height:1px;background:#dcdcdc"></div><div class="a" style="left:0px;top:1020.26px;width:64px;height:1px;background:#dcdcdc"></div><div class="a" style="left:0px;top:1065.42px;width:64px;height:1px;background:#dcdcdc"></div><div class="a" style="left:0px;top:1110.58px;width:64px;height:1px;background:#dcdcdc"></div><div class="a" style="left:0px;top:1155.74px;width:64px;height:1px;background:#dcdcdc"></div><div class="a" style="left:0px;top:1200.90px;width:64px;height:1px;background:#dcdcdc"></div><div class="a" style="left:0px;top:1246.06px;width:64px;height:1px;background:#dcdcdc"></div>
<div class="a" style="left:64px;top:568.66px;width:1952px;height:1px;background:#e4e4e4"></div><div class="a" style="left:64px;top:613.82px;width:1952px;height:1px;background:#e4e4e4"></div><div class="a" style="left:64px;top:658.98px;width:1952px;height:1px;background:#e4e4e4"></div><div class="a" style="left:64px;top:704.14px;width:1952px;height:1px;background:#e4e4e4"></div><div class="a" style="left:64px;top:749.30px;width:1952px;height:1px;background:#e4e4e4"></div><div class="a" style="left:64px;top:794.46px;width:1952px;height:1px;background:#e4e4e4"></div><div class="a" style="left:64px;top:839.62px;width:1952px;height:1px;background:#e4e4e4"></div><div class="a" style="left:64px;top:884.78px;width:1952px;height:1px;background:#e4e4e4"></div><div class="a" style="left:64px;top:929.94px;width:1952px;height:1px;background:#e4e4e4"></div><div class="a" style="left:64px;top:975.10px;width:1952px;height:1px;background:#e4e4e4"></div><div class="a" style="left:64px;top:1020.26px;width:1952px;height:1px;background:#e4e4e4"></div><div class="a" style="left:64px;top:1065.42px;width:1952px;height:1px;background:#e4e4e4"></div><div class="a" style="left:64px;top:1110.58px;width:1952px;height:1px;background:#e4e4e4"></div><div class="a" style="left:64px;top:1155.74px;width:1952px;height:1px;background:#e4e4e4"></div><div class="a" style="left:64px;top:1200.90px;width:1952px;height:1px;background:#e4e4e4"></div><div class="a" style="left:64px;top:1246.06px;width:1952px;height:1px;background:#e4e4e4"></div><div class="a" style="left:1353.2px;top:524px;width:1px;height:752px;background:#e4e4e4"></div><div class="a" style="left:1514.7px;top:524px;width:1px;height:752px;background:#e4e4e4"></div><div class="a" style="left:1675.8px;top:524px;width:1px;height:752px;background:#e4e4e4"></div><div class="a" style="left:1837.9px;top:524px;width:1px;height:752px;background:#e4e4e4"></div><div class="a" style="left:1999.7px;top:524px;width:1px;height:752px;background:#e4e4e4"></div><div class="a" style="left:243.5px;top:1246.56px;width:1px;height:29.44px;background:#e1e1e1"></div><div class="a" style="left:599.8px;top:1246.56px;width:1px;height:29.44px;background:#e1e1e1"></div><div class="a" style="left:861.8px;top:1246.56px;width:1px;height:29.44px;background:#e1e1e1"></div><div class="a" style="left:1107.7px;top:1246.56px;width:1px;height:29.44px;background:#e1e1e1"></div>
<div class="t" style="left:144.38px;top:487.13px;font-size:32.9px;color:#107c41;font-weight:400;transform:scaleX(0.9000);transform-origin:0 0;">A</div>
<div class="t" style="left:412.16px;top:487.13px;font-size:32.9px;color:#444;font-weight:400;transform:scaleX(0.9000);transform-origin:0 0;">B</div>
<div class="t" style="left:720.72px;top:487.13px;font-size:32.9px;color:#444;font-weight:400;transform:scaleX(0.9000);transform-origin:0 0;">C</div>
<div class="t" style="left:974.37px;top:487.13px;font-size:32.9px;color:#444;font-weight:400;transform:scaleX(0.9000);transform-origin:0 0;">D</div>
<div class="t" style="left:1220.81px;top:487.13px;font-size:32.9px;color:#444;font-weight:400;transform:scaleX(0.9000);transform-origin:0 0;">E</div>
<div class="t" style="left:1425.13px;top:487.13px;font-size:32.9px;color:#444;font-weight:400;transform:scaleX(0.9000);transform-origin:0 0;">F</div>
<div class="t" style="left:1584.87px;top:487.13px;font-size:32.9px;color:#444;font-weight:400;transform:scaleX(0.9000);transform-origin:0 0;">G</div>
<div class="t" style="left:1746.99px;top:487.13px;font-size:32.9px;color:#444;font-weight:400;transform:scaleX(0.9000);transform-origin:0 0;">H</div>
<div class="t" style="left:1915.53px;top:487.13px;font-size:32.9px;color:#444;font-weight:400;transform:scaleX(0.9000);transform-origin:0 0;">I</div>
<div class="t" style="left:23.37px;top:532.68px;font-size:31.9px;color:#107c41;font-weight:400;">1</div>
<div class="t" style="left:23.85px;top:577.84px;font-size:31.9px;color:#444;font-weight:400;">2</div>
<div class="t" style="left:23.85px;top:623.00px;font-size:31.9px;color:#444;font-weight:400;">3</div>
<div class="t" style="left:24.01px;top:668.16px;font-size:31.9px;color:#444;font-weight:400;">4</div>
<div class="t" style="left:23.85px;top:713.32px;font-size:31.9px;color:#444;font-weight:400;">5</div>
<div class="t" style="left:23.69px;top:758.48px;font-size:31.9px;color:#444;font-weight:400;">6</div>
<div class="t" style="left:23.85px;top:803.64px;font-size:31.9px;color:#444;font-weight:400;">7</div>
<div class="t" style="left:23.77px;top:848.80px;font-size:31.9px;color:#444;font-weight:400;">8</div>
<div class="t" style="left:23.85px;top:893.96px;font-size:31.9px;color:#444;font-weight:400;">9</div>
<div class="t" style="left:14.36px;top:939.12px;font-size:31.9px;color:#444;font-weight:400;">10</div>
<div class="t" style="left:15.71px;top:984.28px;font-size:31.9px;color:#444;font-weight:400;">11</div>
<div class="t" style="left:14.52px;top:1029.44px;font-size:31.9px;color:#444;font-weight:400;">12</div>
<div class="t" style="left:14.44px;top:1074.61px;font-size:31.9px;color:#444;font-weight:400;">13</div>
<div class="t" style="left:14.20px;top:1119.76px;font-size:31.9px;color:#444;font-weight:400;">14</div>
<div class="t" style="left:14.44px;top:1164.92px;font-size:31.9px;color:#444;font-weight:400;">15</div>
<div class="t" style="left:14.44px;top:1210.09px;font-size:31.9px;color:#444;font-weight:400;">16</div>
<div class="t" style="left:14.52px;top:1255.24px;font-size:31.9px;color:#444;font-weight:400;">17</div>
<div class="a" style="left:64px;top:569.16px;width:1289.7px;height:45.16px;background:#83cbeb"></div><div class="a" style="left:64px;top:614.32px;width:1289.7px;height:45.16px;background:#c1e5f5"></div><div class="a" style="left:64px;top:659.48px;width:1289.7px;height:45.16px;background:#83cbeb"></div><div class="a" style="left:64px;top:704.64px;width:1289.7px;height:45.16px;background:#c1e5f5"></div><div class="a" style="left:64px;top:749.80px;width:1289.7px;height:45.16px;background:#83cbeb"></div><div class="a" style="left:64px;top:794.96px;width:1289.7px;height:45.16px;background:#c1e5f5"></div><div class="a" style="left:64px;top:840.12px;width:1289.7px;height:45.16px;background:#83cbeb"></div><div class="a" style="left:64px;top:885.28px;width:1289.7px;height:45.16px;background:#c1e5f5"></div><div class="a" style="left:64px;top:930.44px;width:1289.7px;height:45.16px;background:#83cbeb"></div><div class="a" style="left:64px;top:975.60px;width:1289.7px;height:45.16px;background:#c1e5f5"></div><div class="a" style="left:64px;top:1020.76px;width:1289.7px;height:45.16px;background:#83cbeb"></div><div class="a" style="left:64px;top:1065.92px;width:1289.7px;height:45.16px;background:#c1e5f5"></div><div class="a" style="left:64px;top:1111.08px;width:1289.7px;height:45.16px;background:#83cbeb"></div><div class="a" style="left:64px;top:1156.24px;width:1289.7px;height:45.16px;background:#c1e5f5"></div><div class="a" style="left:64px;top:1201.40px;width:1289.7px;height:45.16px;background:#83cbeb"></div>
<div class="a" style="left:64px;top:614.02px;width:1289.7px;height:1.2px;background:#e6f4fa"></div><div class="a" style="left:64px;top:659.18px;width:1289.7px;height:1.2px;background:#e6f4fa"></div><div class="a" style="left:64px;top:704.34px;width:1289.7px;height:1.2px;background:#e6f4fa"></div><div class="a" style="left:64px;top:749.50px;width:1289.7px;height:1.2px;background:#e6f4fa"></div><div class="a" style="left:64px;top:794.66px;width:1289.7px;height:1.2px;background:#e6f4fa"></div><div class="a" style="left:64px;top:839.82px;width:1289.7px;height:1.2px;background:#e6f4fa"></div><div class="a" style="left:64px;top:884.98px;width:1289.7px;height:1.2px;background:#e6f4fa"></div><div class="a" style="left:64px;top:930.14px;width:1289.7px;height:1.2px;background:#e6f4fa"></div><div class="a" style="left:64px;top:975.30px;width:1289.7px;height:1.2px;background:#e6f4fa"></div><div class="a" style="left:64px;top:1020.46px;width:1289.7px;height:1.2px;background:#e6f4fa"></div><div class="a" style="left:64px;top:1065.62px;width:1289.7px;height:1.2px;background:#e6f4fa"></div><div class="a" style="left:64px;top:1110.78px;width:1289.7px;height:1.2px;background:#e6f4fa"></div><div class="a" style="left:64px;top:1155.94px;width:1289.7px;height:1.2px;background:#e6f4fa"></div><div class="a" style="left:64px;top:1201.10px;width:1289.7px;height:1.2px;background:#e6f4fa"></div><div class="a" style="left:64px;top:1246.26px;width:1289.7px;height:1.2px;background:#e6f4fa"></div><div class="a" style="left:243.5px;top:569.16px;width:1px;height:677.40px;background:#fff"></div><div class="a" style="left:599.8px;top:569.16px;width:1px;height:677.40px;background:#fff"></div><div class="a" style="left:861.8px;top:569.16px;width:1px;height:677.40px;background:#fff"></div><div class="a" style="left:1107.7px;top:569.16px;width:1px;height:677.40px;background:#fff"></div>
<div class="a" style="left:64px;top:524.0px;width:1289.7px;height:45.15999999999997px;background:#156082"></div>
<div class="a" style="left:243.0px;top:524.00px;width:1.2px;height:45.16px;background:#0b1f2a"></div><div class="a" style="left:599.3px;top:524.00px;width:1.2px;height:45.16px;background:#0b1f2a"></div><div class="a" style="left:861.3px;top:524.00px;width:1.2px;height:45.16px;background:#0b1f2a"></div><div class="a" style="left:1107.2px;top:524.00px;width:1.2px;height:45.16px;background:#0b1f2a"></div><div class="a" style="left:1352.7px;top:524.00px;width:1.2px;height:45.16px;background:#0b1f2a"></div><div class="a" style="left:64px;top:569.06px;width:1289.7px;height:1.3px;background:#0b1f2a"></div>
<div class="t" style="left:118.76px;top:533.73px;font-size:32.2px;color:#fff;font-weight:700;">Date</div>
<div class="t" style="left:391.04px;top:533.73px;font-size:32.2px;color:#fff;font-weight:700;transform:scaleX(0.9651);transform-origin:0 0;">Title</div>
<div class="t" style="left:682.10px;top:533.73px;font-size:32.2px;color:#fff;font-weight:700;transform:scaleX(0.9341);transform-origin:0 0;">Author</div>
<div class="t" style="left:887.08px;top:533.73px;font-size:32.2px;color:#fff;font-weight:700;transform:scaleX(0.9436);transform-origin:0 0;">Quantity Sold</div>
<div class="t" style="left:1131.63px;top:533.73px;font-size:32.2px;color:#fff;font-weight:700;transform:scaleX(0.9430);transform-origin:0 0;">Price per Unit</div>
<div class="t" style="left:68.87px;top:578.49px;font-size:31.85px;color:#000;font-weight:400;transform:scaleX(1.0224);transform-origin:0 0;">2024-04-01</div>
<div class="t" style="left:248.79px;top:578.49px;font-size:31.85px;color:#000;font-weight:400;transform:scaleX(0.9528);transform-origin:0 0;">The Great Gatsby</div>
<div class="t" style="left:603.66px;top:578.49px;font-size:31.85px;color:#000;font-weight:400;transform:scaleX(0.9954);transform-origin:0 0;">F. Scott Fitzgerald</div>
<div class="t" style="left:1085.30px;top:578.49px;font-size:31.85px;color:#000;font-weight:400;">5</div>
<div class="t" style="left:1313.02px;top:578.49px;font-size:31.85px;color:#000;font-weight:400;">15</div>
<div class="t" style="left:68.87px;top:623.65px;font-size:31.85px;color:#000;font-weight:400;transform:scaleX(1.0224);transform-origin:0 0;">2024-04-02</div>
<div class="t" style="left:246.90px;top:623.65px;font-size:31.85px;color:#000;font-weight:400;transform:scaleX(1.0485);transform-origin:0 0;">1984</div>
<div class="t" style="left:604.63px;top:623.65px;font-size:31.85px;color:#000;font-weight:400;transform:scaleX(0.9851);transform-origin:0 0;">George Orwell</div>
<div class="t" style="left:1085.30px;top:623.65px;font-size:31.85px;color:#000;font-weight:400;">8</div>
<div class="t" style="left:1313.18px;top:623.65px;font-size:31.85px;color:#000;font-weight:400;">12</div>
<div class="t" style="left:68.87px;top:668.81px;font-size:31.85px;color:#000;font-weight:400;transform:scaleX(1.0224);transform-origin:0 0;">2024-04-02</div>
<div class="t" style="left:248.77px;top:668.81px;font-size:31.85px;color:#000;font-weight:400;transform:scaleX(0.9818);transform-origin:0 0;">To Kill a Mockingbird</div>
<div class="t" style="left:603.71px;top:668.81px;font-size:31.85px;color:#000;font-weight:400;transform:scaleX(0.9779);transform-origin:0 0;">Harper Lee</div>
<div class="t" style="left:1084.98px;top:668.81px;font-size:31.85px;color:#000;font-weight:400;">4</div>
<div class="t" style="left:1313.02px;top:668.81px;font-size:31.85px;color:#000;font-weight:400;">18</div>
<div class="t" style="left:68.87px;top:713.97px;font-size:31.85px;color:#000;font-weight:400;transform:scaleX(1.0213);transform-origin:0 0;">2024-04-03</div>
<div class="t" style="left:246.91px;top:713.97px;font-size:31.85px;color:#000;font-weight:400;transform:scaleX(0.9780);transform-origin:0 0;">Brave New World</div>
<div class="t" style="left:606.05px;top:713.97px;font-size:31.85px;color:#000;font-weight:400;transform:scaleX(0.9717);transform-origin:0 0;">Aldous Huxley</div>
<div class="t" style="left:1085.30px;top:713.97px;font-size:31.85px;color:#000;font-weight:400;">6</div>
<div class="t" style="left:1312.54px;top:713.97px;font-size:31.85px;color:#000;font-weight:400;">14</div>
<div class="t" style="left:68.87px;top:759.13px;font-size:31.85px;color:#000;font-weight:400;transform:scaleX(1.0213);transform-origin:0 0;">2024-04-03</div>
<div class="t" style="left:248.79px;top:759.13px;font-size:31.85px;color:#000;font-weight:400;transform:scaleX(0.9585);transform-origin:0 0;">The Catcher in the Rye</div>
<div class="t" style="left:605.75px;top:759.13px;font-size:31.85px;color:#000;font-weight:400;transform:scaleX(0.9339);transform-origin:0 0;">J.D. Salinger</div>
<div class="t" style="left:1085.62px;top:759.13px;font-size:31.85px;color:#000;font-weight:400;">7</div>
<div class="t" style="left:1313.18px;top:759.13px;font-size:31.85px;color:#000;font-weight:400;">17</div>
<div class="t" style="left:68.88px;top:804.29px;font-size:31.85px;color:#000;font-weight:400;transform:scaleX(1.0183);transform-origin:0 0;">2024-04-04</div>
<div class="t" style="left:249.24px;top:804.29px;font-size:31.85px;color:#000;font-weight:400;transform:scaleX(0.9840);transform-origin:0 0;">Animal Farm</div>
<div class="t" style="left:604.63px;top:804.29px;font-size:31.85px;color:#000;font-weight:400;transform:scaleX(0.9851);transform-origin:0 0;">George Orwell</div>
<div class="t" style="left:1085.46px;top:804.29px;font-size:31.85px;color:#000;font-weight:400;">9</div>
<div class="t" style="left:1315.57px;top:804.29px;font-size:31.85px;color:#000;font-weight:400;">11</div>
<div class="t" style="left:68.88px;top:849.45px;font-size:31.85px;color:#000;font-weight:400;transform:scaleX(1.0183);transform-origin:0 0;">2024-04-04</div>
<div class="t" style="left:248.78px;top:849.45px;font-size:31.85px;color:#000;font-weight:400;transform:scaleX(0.9810);transform-origin:0 0;">The Hobbit</div>
<div class="t" style="left:605.75px;top:849.45px;font-size:31.85px;color:#000;font-weight:400;transform:scaleX(0.9409);transform-origin:0 0;">J.R.R. Tolkien</div>
<div class="t" style="left:1085.30px;top:849.45px;font-size:31.85px;color:#000;font-weight:400;">5</div>
<div class="t" style="left:1312.86px;top:849.45px;font-size:31.85px;color:#000;font-weight:400;">10</div>
<div class="t" style="left:68.88px;top:894.61px;font-size:31.85px;color:#000;font-weight:400;transform:scaleX(1.0203);transform-origin:0 0;">2024-04-05</div>
<div class="t" style="left:246.84px;top:894.61px;font-size:31.85px;color:#000;font-weight:400;transform:scaleX(1.0033);transform-origin:0 0;">Fahrenheit 451</div>
<div class="t" style="left:603.76px;top:894.61px;font-size:31.85px;color:#000;font-weight:400;transform:scaleX(0.9570);transform-origin:0 0;">Ray Bradbury</div>
<div class="t" style="left:1085.30px;top:894.61px;font-size:31.85px;color:#000;font-weight:400;">3</div>
<div class="t" style="left:1313.02px;top:894.61px;font-size:31.85px;color:#000;font-weight:400;">13</div>
<div class="t" style="left:68.88px;top:939.77px;font-size:31.85px;color:#000;font-weight:400;transform:scaleX(1.0203);transform-origin:0 0;">2024-04-05</div>
<div class="t" style="left:246.89px;top:939.77px;font-size:31.85px;color:#000;font-weight:400;transform:scaleX(0.9864);transform-origin:0 0;">Moby Dick</div>
<div class="t" style="left:603.63px;top:939.77px;font-size:31.85px;color:#000;font-weight:400;transform:scaleX(1.0072);transform-origin:0 0;">Herman Melville</div>
<div class="t" style="left:1085.62px;top:939.77px;font-size:31.85px;color:#000;font-weight:400;">2</div>
<div class="t" style="left:1313.18px;top:939.77px;font-size:31.85px;color:#000;font-weight:400;">19</div>
<div class="t" style="left:68.87px;top:984.93px;font-size:31.85px;color:#000;font-weight:400;transform:scaleX(1.0213);transform-origin:0 0;">2024-04-06</div>
<div class="t" style="left:246.88px;top:984.93px;font-size:31.85px;color:#000;font-weight:400;transform:scaleX(0.9881);transform-origin:0 0;">Pride and Prejudice</div>
<div class="t" style="left:605.74px;top:984.93px;font-size:31.85px;color:#000;font-weight:400;transform:scaleX(0.9596);transform-origin:0 0;">Jane Austen</div>
<div class="t" style="left:1084.98px;top:984.93px;font-size:31.85px;color:#000;font-weight:400;">4</div>
<div class="t" style="left:1313.02px;top:984.93px;font-size:31.85px;color:#000;font-weight:400;">16</div>
<div class="t" style="left:68.87px;top:1030.09px;font-size:31.85px;color:#000;font-weight:400;transform:scaleX(1.0213);transform-origin:0 0;">2024-04-06</div>
<div class="t" style="left:249.24px;top:1030.09px;font-size:31.85px;color:#000;font-weight:400;transform:scaleX(0.9936);transform-origin:0 0;">Wuthering Heights</div>
<div class="t" style="left:603.66px;top:1030.09px;font-size:31.85px;color:#000;font-weight:400;transform:scaleX(0.9954);transform-origin:0 0;">Emily Bronte</div>
<div class="t" style="left:1085.30px;top:1030.09px;font-size:31.85px;color:#000;font-weight:400;">5</div>
<div class="t" style="left:1313.02px;top:1030.09px;font-size:31.85px;color:#000;font-weight:400;">15</div>
<div class="t" style="left:68.87px;top:1075.25px;font-size:31.85px;color:#000;font-weight:400;transform:scaleX(1.0224);transform-origin:0 0;">2024-04-07</div>
<div class="t" style="left:248.97px;top:1075.25px;font-size:31.85px;color:#000;font-weight:400;transform:scaleX(0.9062);transform-origin:0 0;">Jane Eyre</div>
<div class="t" style="left:604.59px;top:1075.25px;font-size:31.85px;color:#000;font-weight:400;transform:scaleX(1.0129);transform-origin:0 0;">Charlotte Bronte</div>
<div class="t" style="left:1085.62px;top:1075.25px;font-size:31.85px;color:#000;font-weight:400;">7</div>
<div class="t" style="left:1313.18px;top:1075.25px;font-size:31.85px;color:#000;font-weight:400;">12</div>
<div class="t" style="left:68.87px;top:1120.41px;font-size:31.85px;color:#000;font-weight:400;transform:scaleX(1.0224);transform-origin:0 0;">2024-04-07</div>
<div class="t" style="left:248.79px;top:1120.41px;font-size:31.85px;color:#000;font-weight:400;transform:scaleX(0.9501);transform-origin:0 0;">The Lord of the Rings</div>
<div class="t" style="left:605.75px;top:1120.41px;font-size:31.85px;color:#000;font-weight:400;transform:scaleX(0.9440);transform-origin:0 0;">J.R.R. Tolkien</div>
<div class="t" style="left:1085.30px;top:1120.41px;font-size:31.85px;color:#000;font-weight:400;">6</div>
<div class="t" style="left:1313.18px;top:1120.41px;font-size:31.85px;color:#000;font-weight:400;">22</div>
<div class="t" style="left:68.87px;top:1165.57px;font-size:31.85px;color:#000;font-weight:400;transform:scaleX(1.0213);transform-origin:0 0;">2024-04-08</div>
<div class="t" style="left:248.78px;top:1165.57px;font-size:31.85px;color:#000;font-weight:400;transform:scaleX(0.9789);transform-origin:0 0;">The Chronicles of Narnia</div>
<div class="t" style="left:604.68px;top:1165.57px;font-size:31.85px;color:#000;font-weight:400;transform:scaleX(0.9550);transform-origin:0 0;">C.S. Lewis</div>
<div class="t" style="left:1085.30px;top:1165.57px;font-size:31.85px;color:#000;font-weight:400;">8</div>
<div class="t" style="left:1312.86px;top:1165.57px;font-size:31.85px;color:#000;font-weight:400;">20</div>
<div class="t" style="left:68.87px;top:1210.73px;font-size:31.85px;color:#000;font-weight:400;transform:scaleX(1.0213);transform-origin:0 0;">2024-04-08</div>
<div class="t" style="left:247.99px;top:1210.73px;font-size:31.85px;color:#000;font-weight:400;transform:scaleX(0.9845);transform-origin:0 0;">Slaughterhouse-Five</div>
<div class="t" style="left:603.68px;top:1210.73px;font-size:31.85px;color:#000;font-weight:400;transform:scaleX(0.9896);transform-origin:0 0;">Kurt Vonnegut</div>
<div class="t" style="left:1085.30px;top:1210.73px;font-size:31.85px;color:#000;font-weight:400;">5</div>
<div class="t" style="left:1312.54px;top:1210.73px;font-size:31.85px;color:#000;font-weight:400;">14</div>
<div class="a" style="left:215.3px;top:540.8px;width:27.8px;height:27.2px;background:#fff;border:1px solid #d4d4d4"></div><svg style="left:223.7px;top:552.0px" width="11" height="6" viewBox="0 0 11 6"><path d="M0 0h11L5.5 6z" fill="#7f7f7f"/></svg><div class="a" style="left:571.6px;top:540.8px;width:27.8px;height:27.2px;background:#fff;border:1px solid #d4d4d4"></div><svg style="left:580.0px;top:552.0px" width="11" height="6" viewBox="0 0 11 6"><path d="M0 0h11L5.5 6z" fill="#7f7f7f"/></svg><div class="a" style="left:833.6px;top:540.8px;width:27.8px;height:27.2px;background:#fff;border:1px solid #d4d4d4"></div><svg style="left:842.0px;top:552.0px" width="11" height="6" viewBox="0 0 11 6"><path d="M0 0h11L5.5 6z" fill="#7f7f7f"/></svg><div class="a" style="left:1079.5px;top:540.8px;width:27.8px;height:27.2px;background:#fff;border:1px solid #d4d4d4"></div><svg style="left:1087.9px;top:552.0px" width="11" height="6" viewBox="0 0 11 6"><path d="M0 0h11L5.5 6z" fill="#7f7f7f"/></svg><div class="a" style="left:1325.0px;top:540.8px;width:27.8px;height:27.2px;background:#fff;border:1px solid #d4d4d4"></div><svg style="left:1333.4px;top:552.0px" width="11" height="6" viewBox="0 0 11 6"><path d="M0 0h11L5.5 6z" fill="#7f7f7f"/></svg>
<div class="a" style="left:62px;top:522px;width:184px;height:50px;border:3px solid #217346"></div>
<div class="a" style="left:65px;top:525px;width:178px;height:44px;border:1px solid #fff"></div>
<div class="a" style="left:239.5px;top:566px;width:6.5px;height:6.5px;background:#217346;box-shadow:-1px -1px 0 0 #fff"></div>
<div class="a" style="left:1343.2px;top:1236.2px;width:9.799999999999955px;height:9.799999999999955px;background:#4a5cb6;clip-path:polygon(100% 0,100% 100%,0 100%,0 52%,52% 52%,52% 0)"></div>
<svg style="left:1775px;top:850px" width="28" height="28" viewBox="0 0 28 28"><path d="M10 2h8v8h8v8h-8v8h-8v-8H2v-8h8z" fill="#000" transform="translate(1.5,1.5)"/><path d="M10 2h8v8h8v8h-8v8h-8v-8H2v-8h8z" fill="#fff" stroke="#000" stroke-width="1.3"/></svg>
<div class="a" style="left:2017.7px;top:479px;width:28.299999999999955px;height:799px;background:#f4f4f4;border-radius:14px"></div>
<div class="a" style="left:2026px;top:507px;width:13px;height:580.3px;background:#717171;border-radius:6.5px"></div>
<svg style="left:2025px;top:487px" width="15" height="12" viewBox="0 0 15 12"><path d="M7.5 1L14 10.5H1z" fill="#717171" stroke="#717171" stroke-width="1.5" stroke-linejoin="round"/></svg>
<svg style="left:2025px;top:1258px" width="15" height="12" viewBox="0 0 15 12"><path d="M7.5 11L14 1.5H1z" fill="#717171" stroke="#717171" stroke-width="1.5" stroke-linejoin="round"/></svg>
<div class="a" style="left:150px;top:1276px;width:150px;height:19px;background:#fff"></div>
<div class="a" style="left:0px;top:1276px;width:177px;height:52px;background:#ebe9e6;border-top-right-radius:10px"></div>
<div class="a" style="left:271.5px;top:1276px;width:1776.5px;height:52px;background:linear-gradient(90deg,#ebe9e6 0%,#e8e7e7 35%,#e6e6e9 60%,#e7e7e9 85%,#ede9e6 100%);border-top-left-radius:10px"></div>
<div class="a" style="left:177px;top:1276px;width:94.5px;height:45.59999999999991px;background:#fff;border-radius:0 0 9px 9px;box-shadow:0 1px 1.5px rgba(0,0,0,.13)"></div>
<svg style="left:33px;top:1292px" width="12" height="17" viewBox="0 0 12 17"><path d="M10.5 1L2 8.5l8.5 7.5" fill="none" stroke="#8a8a8a" stroke-width="1.6"/></svg>
<svg style="left:87px;top:1292px" width="12" height="17" viewBox="0 0 12 17"><path d="M1.5 1L10 8.5 1.5 16" fill="none" stroke="#8a8a8a" stroke-width="1.6"/></svg>
<div class="t" style="left:190.38px;top:1287.34px;font-size:22.9px;color:#1a1a1a;font-weight:700;transform:scaleX(0.9045);transform-origin:0 0;">Sheet1</div>
<div class="a" style="left:190px;top:1313.4px;width:68.80000000000001px;height:3.5px;background:#107c41;border-radius:2px"></div>
<div class="a" style="left:278.5px;top:1287.5px;width:1.3000000000000114px;height:28.700000000000045px;background:#b8b8b8"></div>
<svg style="left:348px;top:1291px" width="19" height="19" viewBox="0 0 19 19"><path d="M9.5 0v19M0 9.5h19" stroke="#333" stroke-width="1.7"/></svg>
<div class="a" style="left:1233.2px;top:1294px;width:4.0px;height:4px;background:#333"></div>
<div class="a" style="left:1233.2px;top:1300.5px;width:4.0px;height:4.0px;background:#333"></div>
<div class="a" style="left:1233.2px;top:1307px;width:4.0px;height:4px;background:#333"></div>
<div class="a" style="left:1262px;top:1287.8px;width:755.8px;height:26.90000000000009px;background:#f5f5f5;border-radius:14px"></div>
<svg style="left:1270px;top:1294px" width="11" height="15" viewBox="0 0 11 15"><path d="M10 1v13L1 7.5z" fill="#717171" stroke="#717171" stroke-width="1.4" stroke-linejoin="round"/></svg>
<svg style="left:1999px;top:1294px" width="11" height="15" viewBox="0 0 11 15"><path d="M1 1v13l9-6.5z" fill="#717171" stroke="#717171" stroke-width="1.4" stroke-linejoin="round"/></svg>
<div class="a" style="left:1290.3px;top:1294.8px;width:646.7px;height:12.600000000000136px;background:#717171;border-radius:6.5px"></div>
<div class="a" style="left:0px;top:1328px;width:2048px;height:37px;background:#f3f3f3"></div>
<div class="t" style="left:17.72px;top:1339.49px;font-size:17.9px;color:#3a3a3a;font-weight:400;transform:scaleX(0.8927);transform-origin:0 0;">Ready</div>
<svg style="left:95px;top:1337px" width="24" height="22" viewBox="0 0 24 22" fill="none" stroke="#2b2b2b" stroke-width="1.6"><path d="M1 20.5V1h22v8"/><path d="M1 4.4h22"/><path d="M3.8 7.8h4.5M3.8 11h2.8M3.8 14.3h2.3M1 19.8h7"/><circle cx="15.7" cy="14" r="6.7" stroke-width="1.5"/><circle cx="15.7" cy="14" r="2.7" fill="#2b2b2b" stroke="none"/></svg>
<svg style="left:147px;top:1335px" width="26" height="24" viewBox="0 0 26 24" fill="none" stroke="#2b2b2b" stroke-width="1.5" stroke-linecap="round" stroke-linejoin="round"><circle cx="10.4" cy="4" r="2.6"/><path d="M10.4 7.3L3.9 5.7Q1.3 5.5 1.5 7.8Q2 9.6 6.1 10.6Q6.6 14.2 6 17.2Q4.8 20.6 5.6 21.9Q6.8 23.2 8.4 22.3"/><path d="M10.4 7.3L16.9 5.7Q19.5 5.5 19.3 7.8Q18.8 9.6 14.7 10.6V14"/><path d="M11.2 17.6l5.1 5 8.2-8.3"/></svg>
<div class="t" style="left:177.21px;top:1339.49px;font-size:17.9px;color:#3a3a3a;font-weight:400;transform:scaleX(0.9508);transform-origin:0 0;">Accessibility: Good to go</div>
<div class="a" style="left:1560.2px;top:1329.2px;width:65.5px;height:35.799999999999955px;background:#e0e0e0"></div>
<svg style="left:1581px;top:1336px" width="23" height="21" viewBox="0 0 23 21" fill="none" stroke="#333" stroke-width="1.5"><rect x="1" y="1" width="21" height="19"/><path d="M1 7.3h21M1 13.6h21M8 1v19M15 1v19"/></svg>
<svg style="left:1647px;top:1336px" width="24" height="21" viewBox="0 0 24 21" fill="none" stroke="#333" stroke-width="1.5"><rect x="1" y="1" width="22" height="19"/><rect x="5" y="4" width="14" height="13"/><path d="M8 8h8M8 11h8M8 14h8"/></svg>
<svg style="left:1713px;top:1336px" width="24" height="21" viewBox="0 0 24 21" fill="none" stroke="#333" stroke-width="1.5"><rect x="1" y="1" width="21.5" height="19.5"/><path d="M1 11h12V1M7 1v10"/></svg>
<div class="a" style="left:1767px;top:1346px;width:13px;height:1.2999999999999545px;background:#555"></div>
<div class="a" style="left:1790px;top:1346px;width:161.5999999999999px;height:1.2000000000000455px;background:#555"></div>
<div class="a" style="left:1870.3px;top:1341.5px;width:1.2000000000000455px;height:10.0px;background:#555"></div>
<div class="a" style="left:1879px;top:1337.5px;width:8.400000000000091px;height:18.59999999999991px;background:#555;border-radius:1px"></div>
<svg style="left:1961px;top:1340px" width="13" height="13" viewBox="0 0 13 13"><path d="M6.5 0v13M0 6.5h13" stroke="#555" stroke-width="1.3"/></svg>
<div class="t" style="left:1993.76px;top:1340.88px;font-size:17.9px;color:#3a3a3a;font-weight:400;transform:scaleX(0.9258);transform-origin:0 0;">145%</div></body></html>
